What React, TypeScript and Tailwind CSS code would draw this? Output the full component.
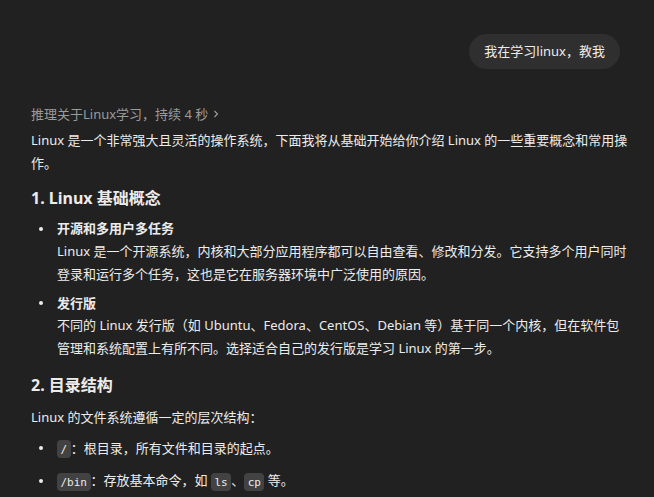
import type { ReactNode } from "react"

const font = { fontFamily: '"Noto Sans", "Noto Sans CJK SC", sans-serif' }

function Code({ children }: { children: ReactNode }) {
  return (
    <code className="rounded-[4px] bg-[#424242] px-[3.5px] py-[2.5px] font-['DejaVu_Sans_Mono',monospace] text-[11px] text-[#ececec]">
      {children}
    </code>
  )
}

function Bullet({ children, className = "" }: { children: ReactNode; className?: string }) {
  return (
    <div className={`flex ${className}`}>
      <div className="flex h-[22.75px] w-[26px] shrink-0 items-center justify-start pl-[8px]">
        <span className="block h-[4px] w-[4px] rounded-full bg-[#ececec]" />
      </div>
      <div className="min-w-0 flex-1">{children}</div>
    </div>
  )
}

export default function App() {
  return (
    <div style={font} className="h-[497px] w-full overflow-hidden bg-[#212121] text-[13px] leading-[22.75px] text-[#ececec]">
      <div className="pl-[31px] pr-[26px] pt-[34px]">
        <div className="flex justify-end pr-[8px]">
          <div className="rounded-full bg-[#2f2f2f] px-[15px] py-[8px] leading-[19px]">我在学习linux，教我</div>
        </div>

        <div className="mt-[34px] flex items-center gap-[4px] text-[#9b9b9b]">
          <span>推理关于Linux学习，持续 4 秒</span>
          <svg width="8" height="10" viewBox="0 0 8 10" fill="none" stroke="#9b9b9b" strokeWidth="1.2">
            <path d="M2.5 2l3 3-3 3" />
          </svg>
        </div>

        <p className="mt-[3px]">
          Linux 是一个非常强大且灵活的操作系统，下面我将从基础开始给你介绍 Linux 的一些重要概念和常用操作。
        </p>

        <h3 className="mt-[11px] text-[16px] font-bold leading-[26px]">1. Linux 基础概念</h3>

        <Bullet className="mt-[6px]">
          <div className="font-semibold">开源和多用户多任务</div>
          <div>
            Linux 是一个开源系统，内核和大部分应用程序都可以自由查看、修改和分发。它支持多个用户同时登录和运行多个任务，这也是它在服务器环境中广泛使用的原因。
          </div>
        </Bullet>

        <Bullet className="mt-[6px]">
          <div className="font-semibold">发行版</div>
          <div>
            不同的 Linux 发行版（如 Ubuntu、Fedora、CentOS、Debian 等）基于同一个内核，但在软件包管理和系统配置上有所不同。选择适合自己的发行版是学习 Linux 的第一步。
          </div>
        </Bullet>

        <h3 className="mt-[12px] text-[16px] font-bold leading-[26px]">2. 目录结构</h3>

        <p className="mt-[8px]">Linux 的文件系统遵循一定的层次结构：</p>

        <Bullet className="mt-[8px]">
          <Code>/</Code>：根目录，所有文件和目录的起点。
        </Bullet>

        <Bullet className="mt-[8px]">
          <Code>/bin</Code>：存放基本命令，如 <Code>ls</Code>、<Code>cp</Code> 等。
        </Bullet>
      </div>
    </div>
  )
}
